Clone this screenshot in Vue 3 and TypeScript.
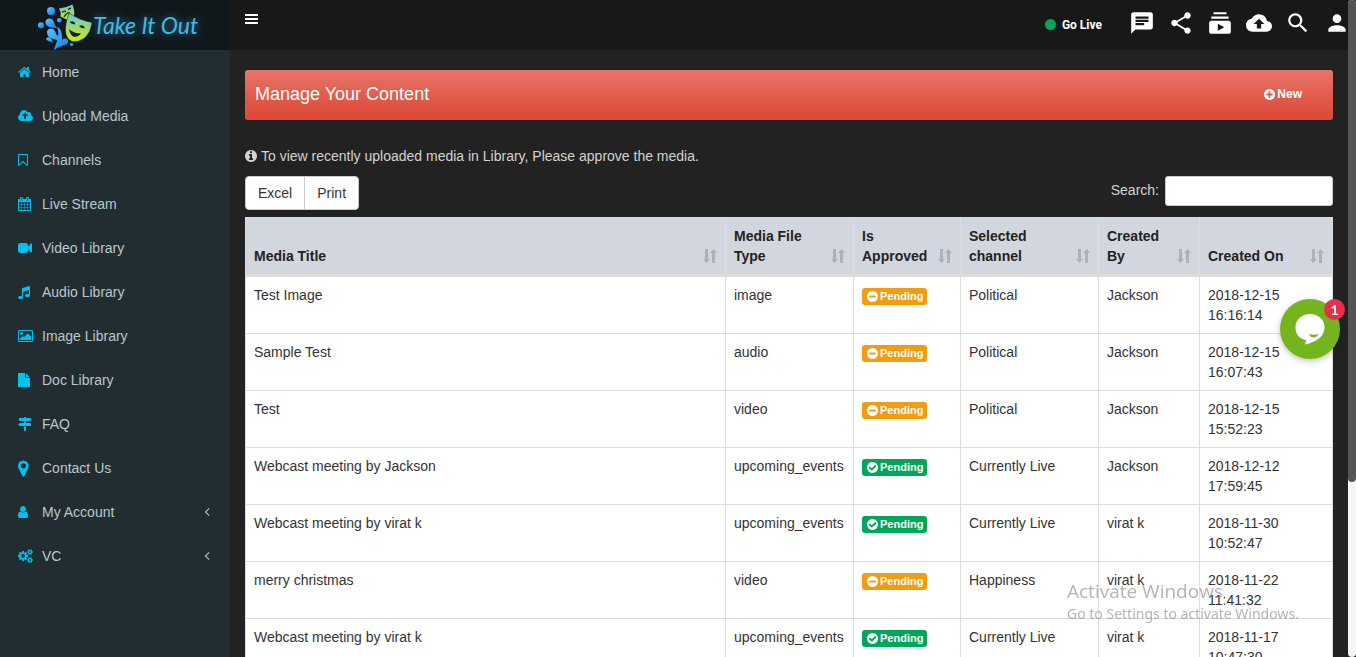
<script setup lang="ts">
import { ref } from 'vue'

interface NavItem {
  label: string
  icon: string
  offset: number
  large?: boolean
  expandable?: boolean
}

interface MediaRow {
  title: string
  type: string
  approved: boolean
  channel: string
  author: string
  date: string
  time: string
}

const disc = 'M1664 896q0 209-103 385.5t-279.5 279.5-385.5 103-385.5-103-279.5-279.5-103-385.5 103-385.5 279.5-279.5 385.5-103 385.5 103 279.5 279.5 103 385.5z'

const paths: Record<string, string> = {
  home: 'M1472 992v480q0 26-19 45t-45 19h-384v-384h-256v384h-384q-26 0-45-19t-19-45v-480q0-1 .5-3t.5-3l575-474 575 474q1 2 1 6zm223-69l-62 74q-8 9-21 11h-3q-13 0-21-7l-692-577-692 577q-12 8-24 7-13-2-21-11l-62-74q-8-10-7-23.5t11-21.5l719-599q32-26 76-26t76 26l244 204v-195q0-14 9-23t23-9h192q14 0 23 9t9 23v408l219 182q10 8 11 21.5t-7 23.5z',
  upload: 'M1216 864q0-14-9-23l-352-352q-9-9-23-9t-23 9l-351 351q-10 12-10 24 0 14 9 23t23 9h224v352q0 13 9.5 22.5t22.5 9.5h192q13 0 22.5-9.5t9.5-22.5v-352h224q13 0 22.5-9.5t9.5-22.5zm640 288q0 159-112.5 271.5t-271.5 112.5h-1088q-185 0-316.5-131.5t-131.5-316.5q0-130 70-240t188-165q-2-30-2-43 0-212 150-362t362-150q156 0 285.5 87t188.5 231q71-62 166-62 106 0 181 75t75 181q0 76-41 138 130 31 213.5 135.5t83.5 238.5z',
  bookmark: 'M1408 256h-1024v1242l423-406 89-85 89 85 423 406v-1242zm12-128q23 0 44 9 33 13 52.5 41t19.5 62v1289q0 34-19.5 62t-52.5 41q-19 8-44 8-48 0-83-32l-441-424-441 424q-36 33-83 33-23 0-44-9-33-13-52.5-41t-19.5-62v-1289q0-34 19.5-62t52.5-41q21-9 44-9h1048z',
  calendar: 'M192 1664h288v-288h-288v288zm352 0h320v-288h-320v288zm-352-352h288v-320h-288v320zm352 0h320v-320h-320v320zm-352-384h288v-288h-288v288zm736 736h320v-288h-320v288zm-384-736h320v-288h-320v288zm768 736h288v-288h-288v288zm-384-352h320v-320h-320v320zm-352-864v-288q0-13-9.5-22.5t-22.5-9.5h-64q-13 0-22.5 9.5t-9.5 22.5v288q0 13 9.5 22.5t22.5 9.5h64q13 0 22.5-9.5t9.5-22.5zm736 864h288v-320h-288v320zm-384-384h320v-288h-320v288zm384 0h288v-288h-288v288zm32-480v-288q0-13-9.5-22.5t-22.5-9.5h-64q-13 0-22.5 9.5t-9.5 22.5v288q0 13 9.5 22.5t22.5 9.5h64q13 0 22.5-9.5t9.5-22.5zm384-64v1280q0 52-38 90t-90 38h-1408q-52 0-90-38t-38-90v-1280q0-52 38-90t90-38h128v-96q0-66 47-113t113-47h64q66 0 113 47t47 113v96h384v-96q0-66 47-113t113-47h64q66 0 113 47t47 113v96h128q52 0 90 38t38 90z',
  video: 'M1792 352v1088q0 42-39 59-13 5-25 5-27 0-45-19l-403-403v166q0 119-84.5 203.5t-203.5 84.5h-704q-119 0-203.5-84.5t-84.5-203.5v-704q0-119 84.5-203.5t203.5-84.5h704q119 0 203.5 84.5t84.5 203.5v165l403-402q18-19 45-19 12 0 25 5 39 17 39 59z',
  music: 'M1664 224v1120q0 50-34 89t-86 60.5-103.5 32-96.5 10.5-96.5-10.5-103.5-32-86-60.5-34-89 34-89 86-60.5 103.5-32 96.5-10.5q105 0 192 39v-537l-768 237v709q0 50-34 89t-86 60.5-103.5 32-96.5 10.5-96.5-10.5-103.5-32-86-60.5-34-89 34-89 86-60.5 103.5-32 96.5-10.5q105 0 192 39v-967q0-31 19-56.5t49-35.5l832-256q12-4 28-4 40 0 68 28t28 68z',
  image: 'M576 576q0 80-56 136t-136 56-136-56-56-136 56-136 136-56 136 56 56 136zm1024 384v448h-1408v-192l320-320 160 160 512-512zm96-704h-1600q-13 0-22.5 9.5t-9.5 22.5v1216q0 13 9.5 22.5t22.5 9.5h1600q13 0 22.5-9.5t9.5-22.5v-1216q0-13-9.5-22.5t-22.5-9.5zm160 32v1216q0 66-47 113t-113 47h-1600q-66 0-113-47t-47-113v-1216q0-66 47-113t113-47h1600q66 0 113 47t47 113z',
  file: 'M1152 512v-472q22 14 36 28l408 408q14 14 28 36h-472zm-128 32q0 40 28 68t68 28h544v1056q0 40-28 68t-68 28h-1344q-40 0-68-28t-28-68v-1600q0-40 28-68t68-28h800v544z',
  signs: 'M1745 297q10 10 10 23t-10 23l-141 141q-28 28-68 28h-1344q-26 0-45-19t-19-45v-256q0-26 19-45t45-19h576v-64q0-26 19-45t45-19h128q26 0 45 19t19 45v64h512q40 0 68 28zm-977 919h256v512q0 26-19 45t-45 19h-128q-26 0-45-19t-19-45v-512zm832-448q26 0 45 19t19 45v256q0 26-19 45t-45 19h-1344q-40 0-68-28l-141-141q-10-10-10-23t10-23l141-141q28-28 68-28h512v-192h256v192h576z',
  marker: 'M1152 640q0-106-75-181t-181-75-181 75-75 181 75 181 181 75 181-75 75-181zm256 0q0 109-33 179l-364 774q-16 33-47.5 52t-67.5 19-67.5-19-46.5-52l-365-774q-33-70-33-179 0-212 150-362t362-150 362 150 150 362z',
  user: 'M1536 1399q0 109-62.5 187t-150.5 78h-854q-88 0-150.5-78t-62.5-187q0-85 8.5-160.5t31.5-152 58.5-131 94-89 134.5-34.5q131 128 313 128t313-128q76 0 134.5 34.5t94 89 58.5 131 31.5 152 8.5 160.5zm-256-887q0 159-112.5 271.5t-271.5 112.5-271.5-112.5-112.5-271.5 112.5-271.5 271.5-112.5 271.5 112.5 112.5 271.5z',
  cogs: 'M832 896q0-106-75-181t-181-75-181 75-75 181 75 181 181 75 181-75 75-181zm768 512q0-52-38-90t-90-38-90 38-38 90q0 53 37.5 90.5t90.5 37.5 90.5-37.5 37.5-90.5zm0-1024q0-52-38-90t-90-38-90 38-38 90q0 53 37.5 90.5t90.5 37.5 90.5-37.5 37.5-90.5zm-384 421v185q0 10-7 19.5t-16 10.5l-155 24q-11 35-32 76 34 48 90 115 7 11 7 20 0 12-7 19-23 30-82.5 89.5t-78.5 59.5q-11 0-21-7l-115-90q-37 19-77 31-11 108-23 155-7 24-30 24h-186q-11 0-20-7.5t-10-17.5l-23-153q-34-10-75-31l-118 89q-7 7-20 7-11 0-21-8-144-133-144-160 0-9 7-19 10-14 41-53t47-61q-23-44-35-82l-152-24q-10-1-17-9.5t-7-19.5v-185q0-10 7-19.5t16-10.5l155-24q11-35 32-76-34-48-90-115-7-11-7-20 0-12 7-20 22-30 82-89t79-59q11 0 21 7l115 90q34-18 77-32 11-108 23-154 7-24 30-24h186q11 0 20 7.5t10 17.5l23 153q34 10 75 31l118-89q8-7 20-7 11 0 21 8 144 133 144 160 0 8-7 19-12 16-42 54t-45 60q23 48 34 82l152 23q10 2 17 10.5t7 19.5zm640 533v140q0 16-149 31-12 27-30 52 51 113 51 138 0 4-4 7-122 71-124 71-8 0-46-47t-52-68q-20 2-30 2t-30-2q-14 21-52 68t-46 47q-2 0-124-71-4-3-4-7 0-25 51-138-18-25-30-52-149-15-149-31v-140q0-16 149-31 13-29 30-52-51-113-51-138 0-4 4-7 4-2 35-20t59-34 30-16q8 0 46 46.5t52 67.5q20-2 30-2t30 2q51-71 92-112l6-2q4 0 124 70 4 3 4 7 0 25-51 138 17 23 30 52 149 15 149 31zm0-1024v140q0 16-149 31-12 27-30 52 51 113 51 138 0 4-4 7-122 71-124 71-8 0-46-47t-52-68q-20 2-30 2t-30-2q-14 21-52 68t-46 47q-2 0-124-71-4-3-4-7 0-25 51-138-18-25-30-52-149-15-149-31v-140q0-16 149-31 13-29 30-52-51-113-51-138 0-4 4-7 4-2 35-20t59-34 30-16q8 0 46 46.5t52 67.5q20-2 30-2t30 2q51-71 92-112l6-2q4 0 124 70 4 3 4 7 0 25-51 138 17 23 30 52 149 15 149 31z',
  info: 'M1152 1376v-160q0-14-9-23t-23-9h-96v-512q0-14-9-23t-23-9h-320q-14 0-23 9t-9 23v160q0 14 9 23t23 9h96v320h-96q-14 0-23 9t-9 23v160q0 14 9 23t23 9h448q14 0 23-9t9-23zm-128-896v-160q0-14-9-23t-23-9h-192q-14 0-23 9t-9 23v160q0 14 9 23t23 9h192q14 0 23-9t9-23z' + disc,
  plus: 'M1344 960v-128q0-26-19-45t-45-19h-256v-256q0-26-19-45t-45-19h-128q-26 0-45 19t-19 45v256h-256q-26 0-45 19t-19 45v128q0 26 19 45t45 19h256v256q0 26 19 45t45 19h128q26 0 45-19t19-45v-256h256q26 0 45-19t19-45z' + disc,
  minus: 'M1344 960v-128q0-26-19-45t-45-19h-768q-26 0-45 19t-19 45v128q0 26 19 45t45 19h768q26 0 45-19t19-45z' + disc,
  check: 'M1412 734q0-28-18-46l-91-90q-19-19-45-19t-45 19l-408 407-226-226q-19-19-45-19t-45 19l-91 90q-18 18-18 46 0 27 18 45l362 362q19 19 45 19 27 0 46-19l543-543q18-18 18-45z' + disc,
  angle: 'M1203 544q0 13-10 23l-393 393 393 393q10 10 10 23t-10 23l-50 50q-10 10-23 10t-23-10l-466-466q-10-10-10-23t10-23l466-466q10-10 23-10t23 10l50 50q10 10 10 23z',
}

const nav: NavItem[] = [
  { label: 'Home', icon: 'home', offset: 64 },
  { label: 'Upload Media', icon: 'upload', offset: -64 },
  { label: 'Channels', icon: 'bookmark', offset: 256 },
  { label: 'Live Stream', icon: 'calendar', offset: 64 },
  { label: 'Video Library', icon: 'video', offset: 0 },
  { label: 'Audio Library', icon: 'music', offset: 128 },
  { label: 'Image Library', icon: 'image', offset: -64 },
  { label: 'Doc Library', icon: 'file', offset: 128 },
  { label: 'FAQ', icon: 'signs', offset: 0 },
  { label: 'Contact Us', icon: 'marker', offset: 384, large: true },
  { label: 'My Account', icon: 'user', offset: 256, expandable: true },
  { label: 'VC', icon: 'cogs', offset: -64, expandable: true },
]

const actions = [
  { label: 'Messages', d: 'M20 2H4c-1.1 0-1.99.9-1.99 2L2 22l4-4h14c1.1 0 2-.9 2-2V4c0-1.1-.9-2-2-2zM6 9h12v2H6V9zm8 5H6v-2h8v2zm4-6H6V6h12v2z' },
  { label: 'Share', d: 'M18 16.08c-.76 0-1.44.3-1.96.77L8.91 12.7c.05-.23.09-.46.09-.7s-.04-.47-.09-.7l7.05-4.11c.54.5 1.25.81 2.04.81 1.66 0 3-1.34 3-3s-1.34-3-3-3-3 1.34-3 3c0 .24.04.47.09.7L8.04 9.81C7.5 9.31 6.79 9 6 9c-1.66 0-3 1.34-3 3s1.34 3 3 3c.79 0 1.5-.31 2.04-.81l7.12 4.16c-.05.21-.08.43-.08.65 0 1.61 1.31 2.92 2.92 2.92s2.92-1.31 2.92-2.92-1.31-2.92-2.92-2.92z' },
  { label: 'Subscriptions', d: 'M20 8H4V6h16v2zm-2-6H6v2h12V2zm4 10v8c0 1.1-.9 2-2 2H4c-1.1 0-2-.9-2-2v-8c0-1.1.9-2 2-2h16c1.1 0 2 .9 2 2zm-6 4l-6-3.27v6.53L16 16z' },
  { label: 'Upload', d: 'M19.35 10.04C18.67 6.59 15.64 4 12 4 9.11 4 6.6 5.64 5.35 8.04 2.34 8.36 0 10.91 0 14c0 3.31 2.69 6 6 6h13c2.76 0 5-2.24 5-5 0-2.64-2.05-4.78-4.65-4.96zM14 13v4h-4v-4H7l5-5 5 5h-3z' },
  { label: 'Find', d: 'M15.5 14h-.79l-.28-.27C15.41 12.59 16 11.11 16 9.5 16 5.91 13.09 3 9.5 3S3 5.91 3 9.5 5.91 16 9.5 16c1.61 0 3.09-.59 4.23-1.57l.27.28v.79l5 4.99L20.49 19l-4.99-5zm-6 0C7.01 14 5 11.99 5 9.5S7.01 5 9.5 5 14 7.01 14 9.5 11.99 14 9.5 14z' },
  { label: 'Profile', d: 'M12 12c2.21 0 4-1.79 4-4s-1.79-4-4-4-4 1.79-4 4 1.79 4 4 4zm0 2c-2.67 0-8 1.34-8 4v2h16v-2c0-2.66-5.33-4-8-4z' },
]

const columns = ['Media Title', 'Media File Type', 'Is Approved', 'Selected channel', 'Created By', 'Created On']

const rows: MediaRow[] = [
  { title: 'Test Image', type: 'image', approved: false, channel: 'Political', author: 'Jackson', date: '2018-12-15', time: '16:16:14' },
  { title: 'Sample Test', type: 'audio', approved: false, channel: 'Political', author: 'Jackson', date: '2018-12-15', time: '16:07:43' },
  { title: 'Test', type: 'video', approved: false, channel: 'Political', author: 'Jackson', date: '2018-12-15', time: '15:52:23' },
  { title: 'Webcast meeting by Jackson', type: 'upcoming_events', approved: true, channel: 'Currently Live', author: 'Jackson', date: '2018-12-12', time: '17:59:45' },
  { title: 'Webcast meeting by virat k', type: 'upcoming_events', approved: true, channel: 'Currently Live', author: 'virat k', date: '2018-11-30', time: '10:52:47' },
  { title: 'merry christmas', type: 'video', approved: false, channel: 'Happiness', author: 'virat k', date: '2018-11-22', time: '11:41:32' },
  { title: 'Webcast meeting by virat k', type: 'upcoming_events', approved: true, channel: 'Currently Live', author: 'virat k', date: '2018-11-17', time: '10:47:30' },
]

const query = ref('')
</script>

<template>
  <div class="app">
    <aside class="sidebar">
      <a class="brand" href="#">
        <svg class="masks" viewBox="36 0 56 50" aria-hidden="true">
          <defs>
            <linearGradient id="mask" x1="0" y1="0" x2="0" y2="1">
              <stop offset="0.1" stop-color="#6fcbd2" />
              <stop offset="0.55" stop-color="#a3d867" />
              <stop offset="1" stop-color="#c8ee16" />
            </linearGradient>
            <linearGradient id="water" x1="0" y1="0" x2="1" y2="1">
              <stop offset="0" stop-color="#5cc4ff" />
              <stop offset="1" stop-color="#0a7fe6" />
            </linearGradient>
          </defs>
          <g fill="url(#water)">
            <circle cx="51" cy="11" r="4" />
            <circle cx="41" cy="25.3" r="3" />
            <circle cx="59.3" cy="20.3" r="2.3" />
            <circle cx="71.6" cy="44.6" r="1.600" />
            <path d="M45.500 22c0-4 6-5 8-1 1 3 1 4 4 7-6 0-12-1-12-6z" />
            <path d="M47 32c0-4 6-5 8-1 1 2 1 4 3 5 1-3 0-6-1-9 5 2 5 7 5 13 3-3 7-1 6 2-1 4-6 3-9 5-2 1-3 2-5 3 1-5 3-7 3-10-4-1-10-2-10-8z" />
            <path d="M46 39c2-3 6-2 7 4-2-2-5-1-7-4z" />
          </g>
          <path d="M59 8.500q8-1 13.500-4 3 8 1 14l-7 1-6-3q1-4-1.500-8z" fill="url(#mask)" />
          <path d="M62 12l4-1M68 9.500l3-1.500M64 17q3-5 6-4" fill="none" stroke="#27421e" stroke-width="1.500" />
          <path d="M69 13q10 7 23 9.500-1 10-8 16-6 4-12 3-6-3-6.500-10-.5-8 3.500-18.500z" fill="url(#mask)" stroke="#11181b" stroke-width=".5" />
          <path d="M69.500 22q5-2 6 2-3 1-6-2zM79 26q4-2 6 2-3 1-6-2zM69 29q5 5 12 4-3 5-8 3.500-3-2-4-7.500z" fill="#10241c" />
        </svg>
        <span class="brand-name">Take It Out</span>
      </a>
      <nav aria-label="Main">
        <a v-for="item in nav" :key="item.label" class="nav-item" href="#">
          <span class="nav-icon">
            <svg :class="item.large ? 'glyph large' : 'glyph'" :viewBox="`${item.offset} 0 1920 1792`" aria-hidden="true"><path :d="paths[item.icon]" /></svg>
          </span>
          <span class="nav-label">{{ item.label }}</span>
          <svg v-if="item.expandable" class="chevron" viewBox="0 64 1792 1792" aria-hidden="true"><path :d="paths.angle" /></svg>
        </a>
      </nav>
    </aside>

    <div class="page">
      <header class="topbar">
        <button class="icon-button menu" type="button" aria-label="Toggle navigation">
          <svg viewBox="0 0 13 10" aria-hidden="true"><path d="M0 0h13v2H0zM0 4h13v2H0zM0 8h13v2H0z" /></svg>
        </button>
        <div class="actions">
          <a class="live" href="#"><span class="dot"></span>Go Live</a>
          <button v-for="a in actions" :key="a.label" class="icon-button action" type="button" :aria-label="a.label">
            <svg viewBox="0 0 24 24" aria-hidden="true"><path :d="a.d" /></svg>
          </button>
        </div>
      </header>

      <main class="content">
        <section class="banner">
          <h1>Manage Your Content</h1>
          <a class="new" href="#">
            <svg viewBox="128 128 1536 1536" aria-hidden="true"><path fill-rule="evenodd" :d="paths.plus" /></svg>New
          </a>
        </section>

        <p class="notice">
          <svg viewBox="128 128 1536 1536" aria-hidden="true"><path fill-rule="evenodd" :d="paths.info" /></svg>
          To view recently uploaded media in Library, Please approve the media.
        </p>

        <div class="toolbar">
          <div class="group">
            <button type="button">Excel</button>
            <button type="button">Print</button>
          </div>
          <label class="search"><span>Search:</span><input v-model="query" type="search" /></label>
        </div>

        <table>
          <colgroup>
            <col />
            <col class="c-type" />
            <col class="c-approved" />
            <col class="c-channel" />
            <col class="c-author" />
            <col class="c-date" />
          </colgroup>
          <thead>
            <tr>
              <th v-for="c in columns" :key="c" scope="col">
                <button class="sort" type="button">
                  <span>{{ c }}</span>
                  <svg viewBox="0 0 14 20" aria-hidden="true"><path d="M2 3h3v10h2l-3.500 4L0 13h2zM10.500 3l3.500 4h-2v10H9V7H7z" /></svg>
                </button>
              </th>
            </tr>
          </thead>
          <tbody>
            <tr v-for="(r, i) in rows" :key="i">
              <td>{{ r.title }}</td>
              <td>{{ r.type }}</td>
              <td>
                <span class="badge" :class="{ approved: r.approved }">
                  <svg viewBox="128 128 1536 1536" aria-hidden="true"><path fill-rule="evenodd" :d="r.approved ? paths.check : paths.minus" /></svg>Pending
                </span>
              </td>
              <td>{{ r.channel }}</td>
              <td>{{ r.author }}</td>
              <td>{{ r.date }}<br />{{ r.time }}</td>
            </tr>
          </tbody>
        </table>
      </main>
    </div>

    <div class="scroll-track"><div class="scroll-thumb"></div></div>

    <div class="watermark">
      <p class="wm-title">Activate Windows</p>
      <p class="wm-text">Go to Settings to activate Windows.</p>
    </div>

    <button class="chat" type="button" aria-label="Open chat">
      <svg viewBox="0 0 60 60" aria-hidden="true">
        <path d="M30 15c8 0 14.500 5.500 14.500 13 0 6-3 10-7 12.500-4 2.500-8 4-12.500 5l1-4.500C19 40 15.500 35 15.500 28.500 15.500 20.500 22 15 30 15z" fill="#fff" />
        <path d="M29 35q5 1.500 9.500 0-2 3.500-5 3.500-3 0-4.500-3.500z" fill="#74b41c" />
      </svg>
      <span class="count">1</span>
    </button>
  </div>
</template>

<style>
html,
body {
  margin: 0;
  background: #222;
}
</style>

<style scoped>
.app {
  display: flex;
  height: 100vh;
  overflow: hidden;
  background: #222;
  color: #333;
  font: 14px/20px "Liberation Sans", Arial, sans-serif;
}
.app *,
.app *::before {
  box-sizing: border-box;
}
a {
  color: inherit;
  text-decoration: none;
}
button,
input {
  font: inherit;
}
svg {
  display: block;
  fill: currentColor;
}
.sidebar {
  flex: 0 0 230px;
  background: #222d32;
  color: #b8c7ce;
}
.brand {
  display: flex;
  align-items: center;
  height: 50px;
  padding-left: 36px;
  background: #11181b;
}
.masks {
  width: 56px;
  height: 50px;
}
.brand-name {
  padding-left: 1px;
  color: #45b8e4;
  font: italic 23px/50px Lato, sans-serif;
  text-shadow: 0 0 8px #2785ad;
  white-space: nowrap;
}
.nav-item {
  display: flex;
  align-items: center;
  height: 44px;
  padding: 0 16px 0 18px;
}
.nav-icon {
  width: 24px;
  color: #00c0ef;
}
.glyph {
  width: 15px;
  height: 14px;
  overflow: visible;
}
.glyph.large {
  width: 20px;
  height: 19px;
}
.nav-label {
  flex: 1;
}
.chevron {
  width: 14px;
  height: 14px;
}
.page {
  flex: 1;
  min-width: 0;
}
.topbar {
  display: flex;
  justify-content: space-between;
  height: 50px;
  padding: 10px 6px 0 15px;
  background: #181818;
  color: #fff;
}
.icon-button {
  padding: 0;
  border: 0;
  background: none;
  color: inherit;
}
.menu {
  align-self: flex-start;
  padding-top: 4px;
}
.menu svg {
  width: 13px;
  height: 10px;
}
.actions {
  display: flex;
  align-items: flex-start;
  gap: 13px;
}
.action svg {
  width: 26px;
  height: 26px;
}
.live {
  display: flex;
  align-items: center;
  gap: 6px;
  height: 29px;
  margin-right: 14px;
  font: bold 12px/16px Roboto, sans-serif;
}
.dot {
  width: 11px;
  height: 11px;
  border-radius: 50%;
  background: #00a65a;
}
.content {
  padding: 20px 23px 0 15px;
}
.banner {
  display: flex;
  align-items: center;
  justify-content: space-between;
  height: 50px;
  padding: 0 31px 2px 10px;
  border-radius: 3px;
  background: linear-gradient(#e77468, #dd4b39 90%);
  color: #fff;
}
h1 {
  margin: 0;
  font-size: 18px;
  font-weight: 400;
  line-height: 20px;
}
.new {
  display: flex;
  align-items: center;
  gap: 2px;
  font-size: 12px;
  font-weight: bold;
}
.new svg {
  width: 11px;
  height: 11px;
}
.notice {
  display: flex;
  align-items: center;
  gap: 4px;
  margin: 26px 0 10px;
  color: #d2d2d2;
}
.notice svg {
  width: 12px;
  height: 12px;
}
.toolbar {
  display: flex;
  align-items: flex-start;
  justify-content: space-between;
  margin-bottom: 7px;
}
.group {
  display: flex;
}
.group button {
  height: 34px;
  padding: 0 12px;
  border: 1px solid #ccc;
  background: #fff;
  color: #333;
}
.group button:first-child {
  border-radius: 4px 0 0 4px;
}
.group button:last-child {
  margin-left: -1px;
  border-radius: 0 4px 4px 0;
}
.search {
  display: flex;
  align-items: center;
  gap: 6px;
  color: #d2d2d2;
}
.search span {
  padding-bottom: 2px;
}
.search input {
  width: 168px;
  height: 30px;
  padding: 5px 10px;
  border: 1px solid #ccc;
  border-radius: 3px;
  background: #fff;
}
table {
  width: 100%;
  table-layout: fixed;
  border: solid #ddd;
  border-width: 1px 0 0 1px;
  border-collapse: separate;
  border-spacing: 0;
  background: #fff;
}
.c-type {
  width: 128px;
}
.c-approved {
  width: 107px;
}
.c-channel {
  width: 138px;
}
.c-author {
  width: 101px;
}
.c-date {
  width: 133px;
}
th,
td {
  padding: 8px;
  border: solid #ddd;
  border-width: 0 1px 1px 0;
  text-align: left;
  vertical-align: top;
}
th {
  border-bottom-width: 3px;
  background: #d2d6de;
  color: #222;
  vertical-align: bottom;
}
.sort {
  display: flex;
  align-items: flex-end;
  justify-content: space-between;
  gap: 8px;
  width: 100%;
  padding: 0;
  border: 0;
  background: none;
  color: inherit;
  text-align: left;
}
.sort svg {
  flex: none;
  width: 14px;
  height: 20px;
  color: #adb1b8;
}
.badge {
  display: flex;
  align-items: center;
  gap: 2px;
  width: 65px;
  height: 17px;
  margin-top: 3px;
  padding-left: 5px;
  border-radius: 3px;
  background: #f39c12;
  color: #fff;
  font-size: 11px;
  font-weight: bold;
  line-height: 17px;
}
.badge.approved {
  background: #00a65a;
}
.badge svg {
  width: 11px;
  height: 11px;
}
.scroll-track {
  position: fixed;
  inset: 0 0 0 auto;
  width: 8px;
  background: #f5f5f5;
  border-radius: 4px;
}
.scroll-thumb {
  height: 482px;
  border-radius: 4px;
  background: #555;
}
.watermark {
  position: fixed;
  right: 53px;
  bottom: 32px;
  width: 236px;
  color: rgba(140, 140, 140, 0.65);
  font-family: "Open Sans", sans-serif;
  white-space: nowrap;
  pointer-events: none;
}
.watermark p {
  margin: 0;
}
.wm-title {
  font-size: 19px;
  line-height: 24px;
}
.wm-text {
  font-family: "Noto Sans", sans-serif;
  font-size: 14px;
  line-height: 22px;
}
.chat {
  position: fixed;
  right: 16px;
  top: calc(50% - 30px);
  width: 60px;
  height: 60px;
  padding: 0;
  border: 0;
  border-radius: 50%;
  background: #74b41c;
  box-shadow: 0 2px 6px rgba(0, 0, 0, 0.25);
}
.count {
  position: absolute;
  top: 0;
  right: -5px;
  width: 21px;
  height: 21px;
  border-radius: 50%;
  background: #e62e4d;
  color: #fff;
  font: bold 14px/21px Lato, sans-serif;
  text-align: center;
}
</style>
